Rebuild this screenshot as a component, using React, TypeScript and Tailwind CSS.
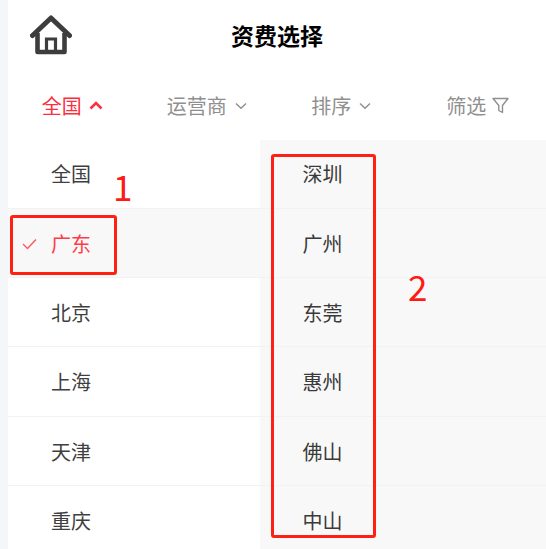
import React from "react";

const provinces = ["全国", "广东", "北京", "上海", "天津", "重庆"];
const cities = ["深圳", "广州", "东莞", "惠州", "佛山", "中山"];
const font = "font-['Noto_Sans_CJK_SC','Noto_Sans',sans-serif]";

function Chevron({ up = false }: { up?: boolean }) {
  return up ? (
    <svg width="14" height="9" viewBox="0 0 14 9" fill="none" className="ml-[7px]">
      <path d="M1.5 7.5 L7 2 L12.5 7.5" stroke="#ff2e3f" strokeWidth="2.6" />
    </svg>
  ) : (
    <svg width="12" height="8" viewBox="0 0 12 8" fill="none" className="ml-[8px]">
      <path d="M1 1.5 L6 6.3 L11 1.5" stroke="#8f8f8f" strokeWidth="1.4" />
    </svg>
  );
}

export default function App() {
  return (
    <div className={`relative h-[549px] w-[546px] overflow-hidden bg-[#f5f6f8] pl-2 ${font}`}>
      <div className="flex h-full flex-col bg-white">
        <header className="relative flex h-[72px] shrink-0 items-center justify-center pb-[2px]">
          <svg width="42" height="40" viewBox="0 0 42 40" fill="none" className="absolute left-[22px] top-[15px]">
            <path d="M2.5 20.5 L21 3 L39.5 20.5" stroke="#3d3d3d" strokeWidth="5" strokeLinecap="round" strokeLinejoin="round" />
            <path d="M7.5 18 V37 H34.5 V18" stroke="#3d3d3d" strokeWidth="4.6" strokeLinejoin="round" />
            <path d="M16.5 37 V24 H25.5 V37" stroke="#3d3d3d" strokeWidth="3.2" />
          </svg>
          <h1 className="text-[23px] font-bold leading-none text-black">资费选择</h1>
        </header>
        <nav className="grid h-[67.5px] shrink-0 grid-cols-4 text-[20px] text-[#8f8f8f]">
          <div className="flex items-center justify-center pr-[6px] text-[#ff2e3f]">全国<Chevron up /></div>
          <div className="flex items-center justify-center pr-[6px]">运营商<Chevron /></div>
          <div className="flex items-center justify-center pr-[6px]">排序<Chevron /></div>
          <div className="flex items-center justify-center pr-[2px]">
            筛选
            <svg width="17" height="17" viewBox="0 0 17 17" fill="none" className="ml-[6px]">
              <path d="M1 1.5 H16 L10.5 8.5 V15.5 L6.8 13.5 V8.5 Z" stroke="#8f8f8f" strokeWidth="1.4" strokeLinejoin="round" />
            </svg>
          </div>
        </nav>
        <div className="flex-1 overflow-hidden bg-[#f8f8f8]">
          {provinces.map((p, i) => (
            <div key={p} className="flex h-[69.3px] border-b border-[#f2f2f2] text-[20px]">
              <div className={`relative flex w-[252px] items-center pl-[43px] pt-[1.5px] ${i === 1 ? "bg-[#f8f8f8] text-[#ff3b48]" : "bg-white text-[#3f3f3f]"}`}>
                {i === 1 && (
                  <svg width="15" height="12" viewBox="0 0 15 12" fill="none" className="absolute left-[14px] top-[29px]">
                    <path d="M1 6 L5.5 10.5 L14 1.5" stroke="#ff5560" strokeWidth="1.4" />
                  </svg>
                )}
                {p}
              </div>
              <div className="flex w-[125px] items-center justify-center pt-[1.5px] text-[#3a3a3a]">{cities[i]}</div>
            </div>
          ))}
        </div>
      </div>
      <div className="absolute left-[10px] top-[215px] h-[60px] w-[107px] rounded-[3px] border-[3px] border-[#ff2015]" />
      <div className="absolute left-[271px] top-[154px] h-[384px] w-[105px] rounded-[3px] border-[3px] border-[#ff2015]" />
      <span className="absolute left-[113px] top-[165px] text-[35px] leading-[42px] text-[#ff1a14]">1</span>
      <span className="absolute left-[408px] top-[265px] text-[35px] leading-[42px] text-[#ff1a14]">2</span>
    </div>
  );
}
